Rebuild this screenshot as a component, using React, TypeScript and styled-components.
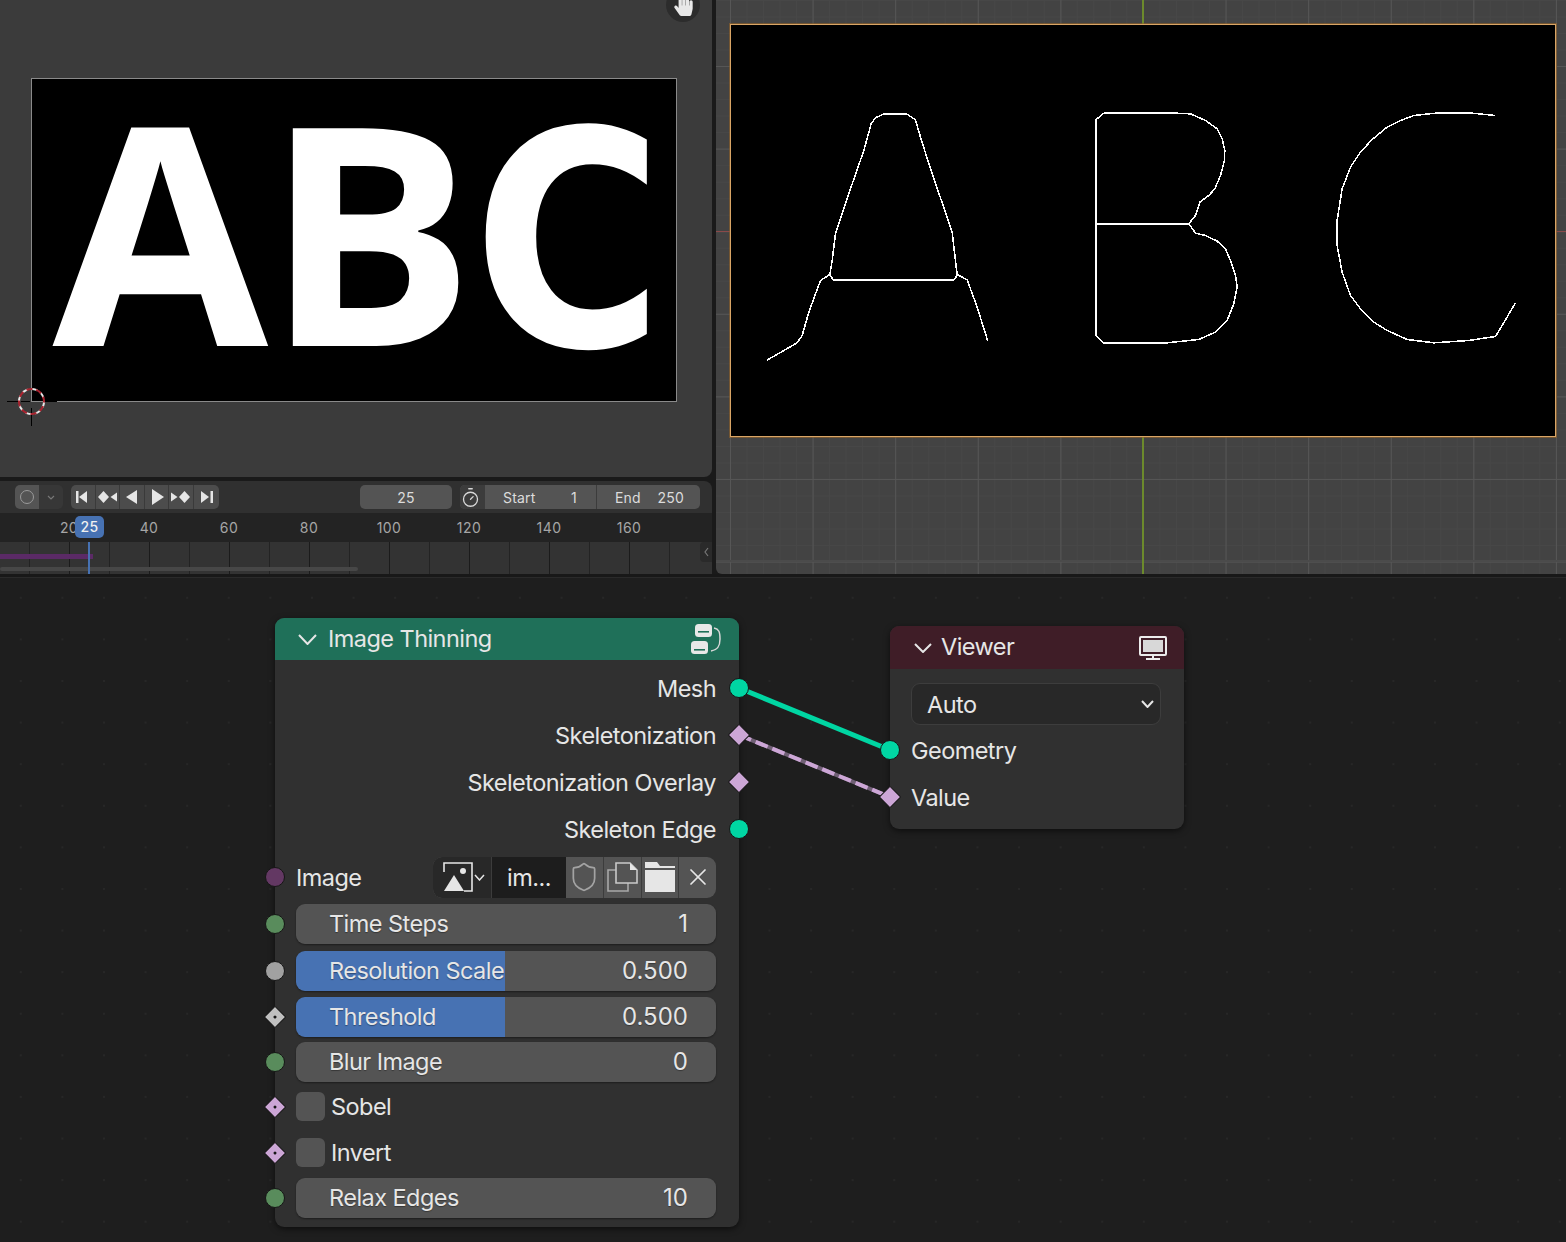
import { ReactNode } from "react";
import styled, { createGlobalStyle } from "styled-components";
import { Shield, Timer, X } from "lucide-react";
import { FaHandPaper } from "react-icons/fa";

const GlobalStyle = createGlobalStyle`
  html, body {
    margin: 0;
    padding: 0;
    background: #1d1d1d;
    overflow: hidden;
  }
  *, *::before, *::after { box-sizing: border-box; }
  #root {
    font-family: Inter, "Noto Sans", sans-serif;
    color: #e6e6e6;
  }
`;

const A_OUTLINE = [
  "48,810 140,757 155,735 175,665 210,570 238,552 248,568 610,568 622,553 650,568 680,650 712,752",
  "238,552 245,510 255,430 270,385 300,295 340,180 362,100 375,82 400,70 468,70 495,88 510,140 540,235 595,395 605,425 620,553",
];
const B_OUTLINE = [
  "46,400 325,400",
  "70,68 285,68 330,70 375,90 410,115 425,145 433,180 432,210 420,255 403,295 385,315 358,335 345,375 325,400 345,428 375,435 410,452 435,475 450,510 465,555 470,590 460,640 440,690 405,725 355,747 260,757 70,758 47,735 46,88 70,68",
];
const C_OUTLINE = [
  "1245,75 1165,67 1075,67 1000,75 960,90 920,110 875,147 840,185 810,230 785,295 770,390 770,465 785,545 810,615 840,655 880,695 920,720 980,747 1060,757 1165,750 1245,738 1265,705 1305,637",
];

const RULER = ["20", "40", "60", "80", "100", "120", "140", "160"];

export default function App() {
  return (
    <Page>
      <GlobalStyle />
      <TopArea>
        <LeftColumn>
          <ImageViewport>
            <HandGizmo>
              <FaHandPaper size={21} color="#e8e8e8" />
            </HandGizmo>
            <RenderedImage>
              <Letters>
                <Letter $gap={21}>A</Letter>
                <Letter $gap={-2.4}>B</Letter>
                <LetterC $gap={-1}>C</LetterC>
              </Letters>
            </RenderedImage>
            <Cursor3D />
          </ImageViewport>
          <Timeline>
            <TimelineBar>
              <ModeGroup>
                <ModeButton>
                  <ModeRing />
                </ModeButton>
                <ModeArrow>
                  <Chevron w={8} h={5} color="#777" stroke={1.2} />
                </ModeArrow>
              </ModeGroup>
              <TransportGroup>
                <TransportButton><TransportIcon kind="start" /></TransportButton>
                <TransportButton><TransportIcon kind="prevKey" /></TransportButton>
                <TransportButton><TransportIcon kind="back" /></TransportButton>
                <TransportButton><TransportIcon kind="play" /></TransportButton>
                <TransportButton><TransportIcon kind="nextKey" /></TransportButton>
                <TransportButton $last><TransportIcon kind="end" /></TransportButton>
              </TransportGroup>
              <BarSpacer />
              <FrameField>25</FrameField>
              <RangeGroup>
                <ClockButton>
                  <Timer size={21} strokeWidth={1.5} color="#d8d8d8" />
                </ClockButton>
                <RangeField $w={112} $right={19}>
                  <span>Start</span>
                  <span>1</span>
                </RangeField>
                <RangeField $w={104} $right={16}>
                  <span>End</span>
                  <span>250</span>
                </RangeField>
              </RangeGroup>
            </TimelineBar>
            <Ruler>
              {RULER.map((n) => (
                <RulerLabel key={n}>{n}</RulerLabel>
              ))}
              <PlayheadBadge>25</PlayheadBadge>
            </Ruler>
            <Track>
              <CacheBar />
              <TrackScroll />
              <PlayheadLine />
              <TrackHandle>
                <Chevron w={5} h={10} color="#777" stroke={1.2} left />
              </TrackHandle>
            </Track>
          </Timeline>
        </LeftColumn>
        <GridViewport>
          <SkeletonImage>
            <SkeletonSvg viewBox="0 0 824 411">
              <g transform="translate(19.5 65.5) scale(0.3333)">
                {A_OUTLINE.map((p) => (
                  <polyline key={p} points={p} />
                ))}
              </g>
              <g transform="translate(349.5 65.5) scale(0.3333)">
                {[...B_OUTLINE, ...C_OUTLINE].map((p) => (
                  <polyline key={p} points={p} />
                ))}
              </g>
            </SkeletonSvg>
          </SkeletonImage>
        </GridViewport>
      </TopArea>

      <NodeEditor>
        <LinkLayer viewBox="0 0 1566 665">
          <line x1="739" y1="111" x2="890" y2="173" stroke="#00d6a3" strokeWidth="5" />
          <line x1="739" y1="158" x2="890" y2="220" stroke="#6f5f74" strokeWidth="4" />
          <line x1="739" y1="158" x2="890" y2="220" stroke="#cca6d6" strokeWidth="4" strokeDasharray="13 5" />
        </LinkLayer>

        <NodeCard $x={275} $y={41} $w={464}>
          <NodeHeader $h={42} $bg="#1f7059">
            <HeaderChevron $left={23}>
              <Chevron w={19} h={11} color="#e6e6e6" stroke={2} />
            </HeaderChevron>
            <HeaderTitle $left={11}>Image Thinning</HeaderTitle>
            <GroupIcon />
          </NodeHeader>
          <ThinningBody>
            <OutputRow>Mesh<Socket $kind="geometry" $side="right" /></OutputRow>
            <OutputRow>Skeletonization<Socket $kind="value" $side="right" /></OutputRow>
            <OutputRow>Skeletonization Overlay<Socket $kind="value" $side="right" /></OutputRow>
            <OutputRow>Skeleton Edge<Socket $kind="geometry" $side="right" /></OutputRow>

            <ImageRow>
              <Socket $kind="image" $side="left" />
              <ImageLabel>Image</ImageLabel>
              <ImagePicker>
                <PickerIcon>
                  <PictureIcon />
                  <Chevron w={11} h={7} color="#e6e6e6" stroke={1.5} />
                </PickerIcon>
                <PickerName>im...</PickerName>
                <PickerButton><Shield size={32} strokeWidth={1.3} color="#a3a3a3" /></PickerButton>
                <PickerButton><CopyIcon /></PickerButton>
                <PickerButton><FolderIcon /></PickerButton>
                <PickerButton $last><X size={28} strokeWidth={1.5} color="#e6e6e6" /></PickerButton>
              </ImagePicker>
            </ImageRow>

            <SliderRow label="Time Steps" value="1" kind="int" top={6} />
            <SliderRow label="Resolution Scale" value="0.500" kind="float" top={7} fill={49.8} />
            <SliderRow label="Threshold" value="0.500" kind="floatField" top={6} fill={49.8} />
            <SliderRow label="Blur Image" value="0" kind="int" top={5} />

            <CheckRow $top={10}>
              <Socket $kind="boolField" $side="left" />
              <CheckBox />
              <CheckLabel>Sobel</CheckLabel>
            </CheckRow>
            <CheckRow $top={16}>
              <Socket $kind="boolField" $side="left" />
              <CheckBox />
              <CheckLabel>Invert</CheckLabel>
            </CheckRow>

            <SliderRow label="Relax Edges" value="10" kind="int" top={10} />
          </ThinningBody>
        </NodeCard>

        <NodeCard $x={890} $y={49} $w={294}>
          <NodeHeader $h={43} $bg="#3f1d27">
            <HeaderChevron $left={24}>
              <Chevron w={18} h={10} color="#e6e6e6" stroke={2} />
            </HeaderChevron>
            <HeaderTitle $left={9}>Viewer</HeaderTitle>
            <MonitorIcon />
          </NodeHeader>
          <ViewerBody>
            <DropDown>
              Auto
              <Chevron w={13} h={8} color="#e6e6e6" stroke={2} />
            </DropDown>
            <InputRow><Socket $kind="geometry" $side="left" />Geometry</InputRow>
            <InputRow><Socket $kind="value" $side="left" />Value</InputRow>
          </ViewerBody>
        </NodeCard>
      </NodeEditor>
    </Page>
  );
}

function SliderRow(props: { label: string; value: string; kind: SocketKind; top: number; fill?: number }) {
  return (
    <SliderWrap $top={props.top}>
      <Socket $kind={props.kind} $side="left" />
      <Slider $fill={props.fill ?? 0}>
        <span>{props.label}</span>
        <SliderValue>{props.value}</SliderValue>
      </Slider>
    </SliderWrap>
  );
}

function Chevron(props: { w: number; h: number; color: string; stroke: number; left?: boolean }) {
  const { w, h, color, stroke, left } = props;
  const pts = left ? `${w - 1},1 1,${h / 2} ${w - 1},${h - 1}` : `1,1 ${w / 2},${h - 1} ${w - 1},1`;
  return (
    <svg width={w} height={h} viewBox={`0 0 ${w} ${h}`} style={{ display: "block", flex: "none" }}>
      <polyline points={pts} fill="none" stroke={color} strokeWidth={stroke} />
    </svg>
  );
}

function TransportIcon({ kind }: { kind: string }) {
  const paths: Record<string, ReactNode> = {
    start: (
      <>
        <rect x="3" y="2" width="2.5" height="12" />
        <path d="M14 2v12L6 8z" />
      </>
    ),
    end: (
      <>
        <rect x="14.5" y="2" width="2.5" height="12" />
        <path d="M5 2v12l8-6z" />
      </>
    ),
    prevKey: (
      <>
        <path d="M1 8l5.5-6L12 8l-5.5 6z" />
        <path d="M20 3.5v9L13.5 8z" />
      </>
    ),
    nextKey: (
      <>
        <path d="M0 3.5v9L6.5 8z" />
        <path d="M8 8l5.5-6L19 8l-5.5 6z" />
      </>
    ),
    back: <path d="M15 1v14L4 8z" />,
    play: <path d="M5 0v16l12-8z" />,
  };
  return (
    <svg width="20" height="16" viewBox="0 0 20 16" fill="#e6e6e6">
      {paths[kind]}
    </svg>
  );
}

function GroupIcon() {
  return (
    <HeaderIcon width="32" height="32" viewBox="0 0 32 32">
      <rect x="5" y="1" width="17" height="13" rx="3.5" fill="#e8e8e8" />
      <rect x="8" y="8" width="11" height="1.6" fill="#1f7059" />
      <rect x="1" y="18" width="17" height="13" rx="3.5" fill="#e8e8e8" />
      <rect x="4" y="26" width="11" height="1.6" fill="#1f7059" />
      <path d="M24 5c5 1 6 4 6 11s-2 11-9 12" fill="none" stroke="#d8d8d8" strokeWidth="1.5" />
    </HeaderIcon>
  );
}

function MonitorIcon() {
  return (
    <HeaderIcon width="28" height="24" viewBox="0 0 28 24">
      <rect x="1" y="1" width="26" height="18" rx="1" fill="none" stroke="#ececec" strokeWidth="2" />
      <rect x="4" y="4" width="20" height="12" fill="#d8d8d8" />
      <rect x="13" y="19" width="2" height="3" fill="#ececec" />
      <rect x="7" y="22" width="14" height="2" fill="#ececec" />
    </HeaderIcon>
  );
}

function PictureIcon() {
  return (
    <svg width="30" height="30" viewBox="0 0 30 30" style={{ flex: "none" }}>
      <path d="M1 10V1h28v28h-8" fill="none" stroke="#e6e6e6" strokeWidth="1.6" />
      <circle cx="20" cy="9" r="3" fill="#e6e6e6" />
      <path d="M1 29L11 13l10 16z" fill="#e6e6e6" />
    </svg>
  );
}

function CopyIcon() {
  return (
    <svg width="32" height="30" viewBox="0 0 32 30" fill="none" stroke="#a8a8a8" strokeWidth="1.6">
      <path d="M10 8H2v21h20v-8" />
      <path d="M10 21V1h14l7 7v13z" fill="#545454" stroke="#c9c9c9" />
      <path d="M24 1v7h7z" fill="#e6e6e6" stroke="none" />
    </svg>
  );
}

function FolderIcon() {
  return (
    <svg width="30" height="30" viewBox="0 0 30 30" fill="#e6e6e6">
      <path d="M0 0h12l3 4h15v2H0z" />
      <rect x="0" y="8" width="30" height="22" />
    </svg>
  );
}

type SocketKind = "geometry" | "value" | "image" | "int" | "float" | "floatField" | "boolField";

const SOCKET_COLORS: Record<SocketKind, string> = {
  geometry: "#00d6a3",
  value: "#cca6d6",
  image: "#633863",
  int: "#598c5c",
  float: "#a1a1a1",
  floatField: "#c0c0c0",
  boolField: "#cca6d6",
};

const isDiamond = (kind: SocketKind) => ["value", "floatField", "boolField"].includes(kind);

const Page = styled.div`
  width: 1566px;
  height: 1242px;
  display: grid;
  grid-template-rows: 574px 1fr;
  overflow: hidden;
`;

const TopArea = styled.div`
  display: grid;
  grid-template-columns: 712px 1fr;
  gap: 4px;
  background: #1a1a1a;
`;

const LeftColumn = styled.div`
  display: flex;
  flex-direction: column;
  gap: 4px;
`;

const ImageViewport = styled.div`
  position: relative;
  height: 477px;
  padding: 78px 0 0 31px;
  background: #3b3b3b;
  border-bottom-right-radius: 8px;
  overflow: hidden;
`;

const HandGizmo = styled.div`
  position: absolute;
  left: 666px;
  top: -12px;
  width: 34px;
  height: 34px;
  border-radius: 50%;
  background: #2c2c2c;
  display: flex;
  align-items: center;
  justify-content: center;
`;

const RenderedImage = styled.div`
  width: 646px;
  height: 324px;
  background: #000;
  border: 1px solid #8a8a8a;
`;

const Letters = styled.div`
  display: flex;
  align-items: baseline;
  color: #fff;
  font-family: "Open Sans", sans-serif;
  font-weight: 700;
  font-size: 305px;
  line-height: 297px;
  transform: scaleX(1.025);
  transform-origin: 0 0;
`;

const Letter = styled.span<{ $gap: number }>`
  display: block;
  margin-left: ${(p) => p.$gap - 1}px;
`;

const LetterC = styled(Letter)`
  font-family: "DejaVu Sans", sans-serif;
  font-size: 300px;
  transform: scaleX(0.845);
  transform-origin: 0 0;
`;

const Cursor3D = styled.div`
  position: absolute;
  left: 5px;
  top: 375px;
  width: 52px;
  height: 52px;
  background:
    linear-gradient(#000, #000) no-repeat 2px 26px / 11px 1px,
    linear-gradient(#000, #000) no-repeat 40px 26px / 12px 1px,
    linear-gradient(#000, #000) no-repeat 26px 33px / 1px 18px,
    linear-gradient(#000, #000) no-repeat 16px 26px / 9px 1px;

  &::before,
  &::after {
    content: "";
    position: absolute;
    left: 13px;
    top: 13px;
    width: 27px;
    height: 27px;
    border-radius: 50%;
    border: 2px dashed #e8e8e8;
  }
  &::after {
    border-color: #a8232f;
    transform: rotate(22deg);
  }
`;

const Timeline = styled.div`
  height: 93px;
  display: flex;
  flex-direction: column;
  background: #303030;
  border-top-right-radius: 8px;
  overflow: hidden;
`;

const TimelineBar = styled.div`
  height: 32px;
  display: flex;
  align-items: center;
  padding: 0 12px 0 15px;
  font-size: 14px;
  letter-spacing: 0.2px;
`;

const ModeGroup = styled.div`
  width: 48px;
  height: 24px;
  display: flex;
  border-radius: 5px;
  overflow: hidden;
`;

const ModeButton = styled.div`
  width: 24px;
  display: flex;
  align-items: center;
  justify-content: center;
  background: #545454;
`;

const ModeRing = styled.div`
  width: 14px;
  height: 14px;
  border: 1.5px solid #9a9a9a;
  border-radius: 50%;
`;

const ModeArrow = styled.div`
  width: 24px;
  display: flex;
  align-items: center;
  justify-content: center;
  background: #373737;
`;

const TransportGroup = styled.div`
  margin-left: 8px;
  height: 24px;
  display: flex;
  border-radius: 5px;
  overflow: hidden;
  background: #4c4c4c;
`;

const TransportButton = styled.div<{ $last?: boolean }>`
  width: 24.6px;
  display: flex;
  align-items: center;
  justify-content: center;
  border-right: ${(p) => (p.$last ? "none" : "1px solid #3a3a3a")};
`;

const BarSpacer = styled.div`
  flex: 1;
`;

const FrameField = styled.div`
  width: 92px;
  height: 24px;
  display: flex;
  align-items: center;
  justify-content: center;
  background: #545454;
  border-radius: 5px;
  color: #dcdcdc;
`;

const RangeGroup = styled.div`
  margin-left: 8px;
  width: 240px;
  height: 24px;
  display: flex;
  border-radius: 5px;
  overflow: hidden;
  background: #545454;
  color: #dcdcdc;
`;

const ClockButton = styled.div`
  width: 24px;
  display: flex;
  align-items: center;
  justify-content: center;
  padding-right: 3px;
  background: #3c3c3c;
`;

const RangeField = styled.div<{ $w: number; $right: number }>`
  width: ${(p) => p.$w}px;
  display: flex;
  align-items: center;
  justify-content: space-between;
  padding: 0 ${(p) => p.$right}px 0 18px;
  border-left: 1px solid #3c3c3c;
`;

const Ruler = styled.div`
  position: relative;
  height: 29px;
  display: flex;
  padding-left: 29px;
  background: #232323;
  color: #a6a6a6;
  font-size: 14px;
  letter-spacing: 0.4px;
`;

const RulerLabel = styled.div`
  width: 80px;
  flex: none;
  text-align: center;
  line-height: 29px;
`;

const PlayheadBadge = styled.div`
  position: absolute;
  left: 75px;
  top: 3px;
  width: 29px;
  height: 22px;
  border-radius: 5px;
  background: #4772b3;
  color: #f0f0f0;
  font-size: 14px;
  font-weight: 500;
  text-align: center;
  line-height: 21px;
`;

const Track = styled.div`
  position: relative;
  flex: 1;
  background-color: #333;
  background-image:
    repeating-linear-gradient(90deg, transparent 0 39px, #232323 39px 40px, transparent 40px 79px, #1b1b1b 79px 80px);
  background-position: -10px 0;
`;

const CacheBar = styled.div`
  position: absolute;
  left: 0;
  top: 12px;
  width: 93px;
  height: 5px;
  background: #5b2a66;
`;

const TrackScroll = styled.div`
  position: absolute;
  left: 0;
  bottom: 3px;
  width: 358px;
  height: 4px;
  border-radius: 2px;
  background: #474747;
`;

const PlayheadLine = styled.div`
  position: absolute;
  left: 88px;
  top: 0;
  bottom: 0;
  width: 1.5px;
  background: #4772b3;
`;

const TrackHandle = styled.div`
  position: absolute;
  right: 0;
  top: 0;
  width: 12px;
  height: 20px;
  display: flex;
  align-items: center;
  justify-content: center;
  background: #2a2a2a;
  border-radius: 4px 0 0 4px;
`;

const GridViewport = styled.div`
  padding: 24px 10px 0 14px;
  border-bottom-left-radius: 6px;
  background-color: #434343;
  background-image:
    linear-gradient(#6c8a2c, #6c8a2c),
    linear-gradient(#8a4a4a, #8a4a4a),
    linear-gradient(#4b4b4b, #4b4b4b),
    linear-gradient(90deg, #565656 1px, transparent 1px),
    linear-gradient(#565656 1px, transparent 1px),
    linear-gradient(90deg, #474747 1px, transparent 1px),
    linear-gradient(#474747 1px, transparent 1px);
  background-repeat: no-repeat, no-repeat, no-repeat, repeat, repeat, repeat, repeat;
  background-size: 2px 100%, 100% 1px, 100% 2px, 82.6px 82.6px, 82.6px 82.6px, 16.52px 16.52px, 16.52px 16.52px;
  background-position: 426px 0, 0 231px, 0 560px, 14px 0, 0 66px, 14px 0, 0 0;
`;

const SkeletonImage = styled.div`
  width: 826px;
  height: 413px;
  background: #000;
  border: 1px solid #d9a566;
  box-shadow: 0 0 0 1px rgba(150, 100, 40, 0.6);
`;

const SkeletonSvg = styled.svg`
  display: block;
  width: 100%;
  height: 100%;
  fill: none;
  stroke: #fff;
  stroke-width: 4.6;
  stroke-linejoin: round;
  shape-rendering: crispEdges;
`;

const NodeEditor = styled.div`
  position: relative;
  overflow: hidden;
  border-top: 3px solid #181818;
  background-color: #1e1e1e;
  background-image: radial-gradient(circle, #272727 1px, transparent 1.3px);
  background-size: 41.6px 41.6px;
  box-shadow: inset 0 1px 0 #2a2a2a;
  font-size: 23.5px;
  letter-spacing: -0.55px;
`;

const LinkLayer = styled.svg`
  position: absolute;
  left: 0;
  top: 0;
  width: 1566px;
  height: 665px;
`;

const NodeCard = styled.div<{ $x: number; $y: number; $w: number }>`
  position: absolute;
  left: ${(p) => p.$x}px;
  top: ${(p) => p.$y}px;
  width: ${(p) => p.$w}px;
  background: #303030;
  border-radius: 9px;
  box-shadow: 0 2px 6px rgba(0, 0, 0, 0.55);
`;

const NodeHeader = styled.div<{ $h: number; $bg: string }>`
  height: ${(p) => p.$h}px;
  display: flex;
  align-items: center;
  background: ${(p) => p.$bg};
  border-radius: 9px 9px 0 0;
`;

const HeaderChevron = styled.div<{ $left: number }>`
  margin-left: ${(p) => p.$left}px;
`;

const HeaderTitle = styled.div<{ $left: number }>`
  flex: 1;
  margin-left: ${(p) => p.$left}px;
  padding-bottom: 2px;
`;

const HeaderIcon = styled.svg`
  flex: none;
  margin-right: 17px;
`;

const ThinningBody = styled.div`
  padding: 4.5px 23px 9px 21px;
`;

const ViewerBody = styled.div`
  padding: 14px 23px 8.5px 21px;
`;

const OutputRow = styled.div`
  position: relative;
  height: 47px;
  display: flex;
  align-items: center;
  justify-content: flex-end;
`;

const InputRow = styled.div`
  position: relative;
  height: 47px;
  display: flex;
  align-items: center;
`;

const Socket = styled.div<{ $kind: SocketKind; $side: "left" | "right" }>`
  position: absolute;
  top: 50%;
  left: ${(p) => (p.$side === "left" ? "-21px" : "calc(100% + 23px)")};
  width: ${(p) => (isDiamond(p.$kind) ? 16 : 20)}px;
  height: ${(p) => (isDiamond(p.$kind) ? 16 : 20)}px;
  border-radius: ${(p) => (isDiamond(p.$kind) ? "1px" : "50%")};
  transform: translate(-50%, -50%) ${(p) => (isDiamond(p.$kind) ? "rotate(45deg)" : "")};
  background: ${(p) => SOCKET_COLORS[p.$kind]};
  border: 1px solid #161616;
  z-index: 2;

  &::after {
    content: "";
    display: ${(p) => (p.$kind === "floatField" || p.$kind === "boolField" ? "block" : "none")};
    position: absolute;
    left: 50%;
    top: 50%;
    width: 3px;
    height: 3px;
    transform: translate(-50%, -50%);
    background: #161616;
    border-radius: 50%;
  }
`;

const ImageRow = styled.div`
  position: relative;
  margin-top: 4px;
  height: 41px;
  display: flex;
  align-items: center;
  justify-content: space-between;
`;

const ImageLabel = styled.div``;

const ImagePicker = styled.div`
  width: 283px;
  height: 41px;
  display: flex;
  border-radius: 9px;
  overflow: hidden;
  background: #545454;
`;

const PickerIcon = styled.div`
  width: 59px;
  display: flex;
  align-items: center;
  justify-content: center;
  gap: 1px;
  padding-left: 3px;
  background: #282828;
  border-right: 1px solid #3c3c3c;
`;

const PickerName = styled.div`
  width: 74px;
  display: flex;
  align-items: center;
  justify-content: center;
  background: #1d1d1d;
`;

const PickerButton = styled.div<{ $last?: boolean }>`
  flex: 1;
  display: flex;
  align-items: center;
  justify-content: center;
  border-right: ${(p) => (p.$last ? "none" : "1px solid #3c3c3c")};
`;

const SliderWrap = styled.div<{ $top: number }>`
  position: relative;
  margin-top: ${(p) => p.$top}px;
`;

const Slider = styled.div<{ $fill: number }>`
  height: 40px;
  display: flex;
  align-items: center;
  justify-content: space-between;
  padding: 0 28px 0 33px;
  border-radius: 9px;
  background: linear-gradient(90deg, #4772b3 ${(p) => p.$fill}%, #545454 ${(p) => p.$fill}%);
  box-shadow: 0 1px 2px rgba(0, 0, 0, 0.4);
  text-shadow: 0 1px 1px rgba(0, 0, 0, 0.35);
`;

const SliderValue = styled.span`
  font-size: 24px;
  letter-spacing: 0;
`;

const CheckRow = styled.div<{ $top: number }>`
  position: relative;
  margin-top: ${(p) => p.$top}px;
  height: 30px;
  display: flex;
  align-items: center;
  gap: 6px;
`;

const CheckBox = styled.div`
  width: 29px;
  height: 29px;
  border-radius: 6px;
  background: #545454;
`;

const CheckLabel = styled.div``;

const DropDown = styled.div`
  height: 42px;
  display: flex;
  align-items: center;
  justify-content: space-between;
  padding: 0 6px 0 15px;
  margin-bottom: 1.5px;
  background: #282828;
  border: 1px solid #3d3d3d;
  border-radius: 9px;
`;
